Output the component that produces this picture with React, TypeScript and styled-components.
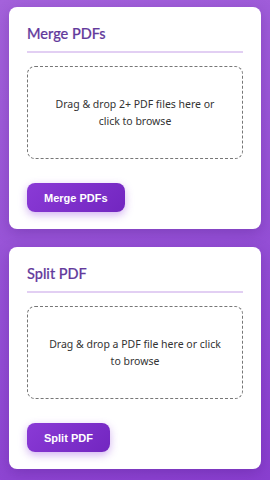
import React from "react";
import styled, { createGlobalStyle } from "styled-components";

const Global = createGlobalStyle`
  html, body { margin: 0; padding: 0; }
  body {
    min-height: 480px;
    background: linear-gradient(160deg, #a462db 0%, #9550d6 55%, #8a3fd0 100%);
    font-family: "Noto Sans", "Open Sans", sans-serif;
  }
`;

const Page = styled.div`
  display: flex;
  flex-direction: column;
  gap: 18px;
  padding: 7px 9px 11px;
`;

const Card = styled.section`
  background: #fff;
  border-radius: 8px;
  padding: 16px 18px 17px;
  box-shadow: 0 4px 14px rgba(60, 10, 110, 0.25);
`;

const Title = styled.h2`
  margin: 0 0 13px;
  padding-bottom: 7px;
  font-family: Lato, "Noto Sans", sans-serif;
  font-size: 14.5px;
  line-height: 21px;
  font-weight: 500;
  color: #633a9c;
  -webkit-text-stroke: 0.2px #633a9c;
  border-bottom: 2px solid #e2cff3;
`;

const Drop = styled.div`
  height: 93px;
  box-sizing: border-box;
  border: 1.5px dashed #767676;
  border-radius: 8px;
  display: flex;
  align-items: center;
  justify-content: center;
  text-align: center;
  padding: 0 18px;
  font-size: 10.5px;
  line-height: 17px;
  color: #333;
`;

const Button = styled.button`
  margin-top: 24px;
  height: 29px;
  padding: 0 17px;
  border: none;
  border-radius: 8px;
  background: linear-gradient(135deg, #8a3ad6 0%, #7226c0 100%);
  color: #fff;
  font-family: "Liberation Sans", Arial, sans-serif;
  font-weight: 700;
  font-size: 11px;
  box-shadow: 0 3px 8px rgba(140, 60, 220, 0.4);
  cursor: pointer;
`;

const Tool = ({ title, text, action }: { title: string; text: string; action: string }) => (
  <Card>
    <Title>{title}</Title>
    <Drop>{text}</Drop>
    <Button>{action}</Button>
  </Card>
);

export default function App() {
  return (
    <>
      <Global />
      <Page>
        <Tool title="Merge PDFs" text="Drag & drop 2+ PDF files here or click to browse" action="Merge PDFs" />
        <Tool title="Split PDF" text="Drag & drop a PDF file here or click to browse" action="Split PDF" />
      </Page>
    </>
  );
}
